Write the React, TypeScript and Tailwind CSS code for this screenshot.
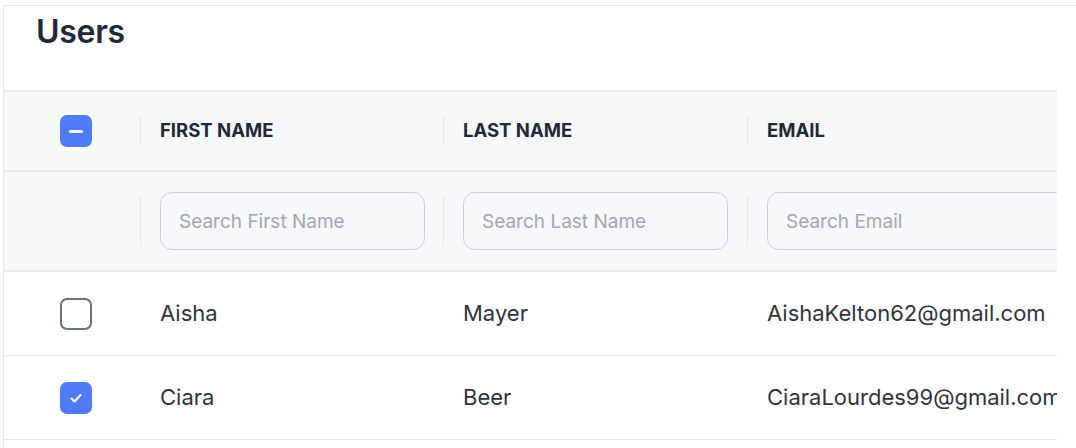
import React from 'react';

const users = [
  { first: 'Aisha', last: 'Mayer', email: 'AishaKelton62@gmail.com', checked: false },
  { first: 'Ciara', last: 'Beer', email: 'CiaraLourdes99@gmail.com', checked: true },
];

const Sep: React.FC<{ tall?: boolean }> = ({ tall }) => (
  <div className={`w-px bg-[#e5e7eb] shrink-0 ${tall ? 'h-[50px]' : 'h-[30px]'}`}></div>
);

const Checkbox: React.FC<{ state: 'none' | 'checked' | 'mixed' }> = ({ state }) => {
  if (state === 'none') {
    return <div className="w-[32px] h-[32px] rounded-[7px] border-2 border-[#6b7280] bg-white"></div>;
  }
  return (
    <div className="w-[32px] h-[32px] rounded-[7px] bg-[#4f7cf6] flex items-center justify-center">
      {state === 'mixed' ? (
        <div className="w-[14px] h-[3px] rounded-full bg-white"></div>
      ) : (
        <svg width="14" height="14" viewBox="0 0 14 14" fill="none">
          <path d="M2.5 7.5l3 3 6-6.5" stroke="white" strokeWidth="2" strokeLinecap="round" strokeLinejoin="round" />
        </svg>
      )}
    </div>
  );
};

const App: React.FC = () => {
  const cols = 'grid grid-cols-[136px_303px_304px_1fr]';
  return (
    <div className="w-[1076px] h-[448px] bg-white overflow-hidden pt-[5px] pl-[3px]" style={{ fontFamily: 'Inter, "Liberation Sans", sans-serif' }}>
      <div className="border-t border-l border-[#e5e7eb] h-full">
        {/* Title */}
        <div className="h-[84px] pl-[32px] pt-[6px]">
          <h1 className="text-[32px] leading-[40px] font-semibold text-[#1f2937] tracking-[-0.3px]">Users</h1>
        </div>

        <div className="w-[1053px] overflow-hidden">
          {/* Header */}
          <div className={`${cols} h-[82px] bg-[#f7f8fa] border-t-2 border-b-2 border-[#e8eaee]`}>
            <div className="flex items-center pl-[56px]">
              <Checkbox state="mixed" />
            </div>
            {['FIRST NAME', 'LAST NAME', 'EMAIL'].map((h) => (
              <div key={h} className="flex items-center">
                <Sep />
                <span className="ml-[19px] text-[18.5px] font-bold text-[#1f2937]">{h}</span>
              </div>
            ))}
          </div>

          {/* Filters */}
          <div className={`${cols} h-[100px] bg-[#f7f8fa] border-b-2 border-[#e8eaee]`}>
            <div></div>
            {['Search First Name', 'Search Last Name', 'Search Email'].map((p, i) => (
              <div key={p} className="flex items-center">
                <Sep tall />
                <input
                  placeholder={p}
                  className={`ml-[19px] h-[58px] rounded-[12px] border border-[#cdd2da] bg-transparent px-[18px] text-[19px] placeholder:text-[#a3a7ae] outline-none ${i === 2 ? 'w-[320px]' : 'w-[265px]'}`}
                />
              </div>
            ))}
          </div>

          {/* Rows */}
          {users.map((u) => (
            <div key={u.email} className={`${cols} h-[84px] border-b border-[#e8eaee] text-[22px] text-[#2f343c]`}>
              <div className="flex items-center pl-[56px]">
                <Checkbox state={u.checked ? 'checked' : 'none'} />
              </div>
              <div className="flex items-center pl-[20px]">{u.first}</div>
              <div className="flex items-center pl-[20px]">{u.last}</div>
              <div className="flex items-center pl-[20px] whitespace-nowrap">{u.email}</div>
            </div>
          ))}
        </div>
      </div>
    </div>
  );
};

export default App;
